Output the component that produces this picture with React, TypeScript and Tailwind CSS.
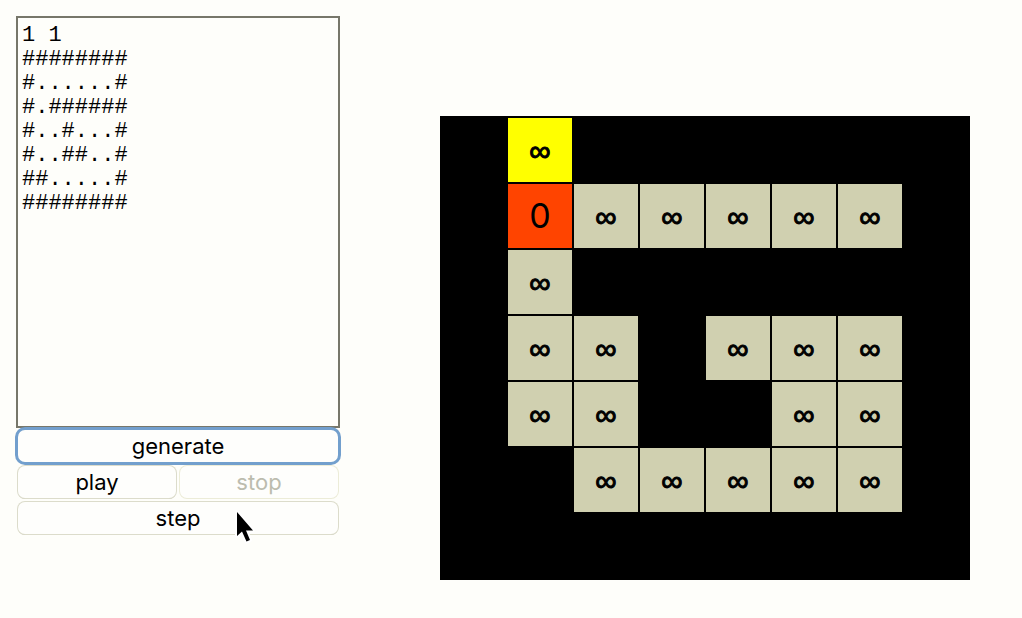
import { useState } from "react";

const initialMaze = [
  "1 1",
  "########",
  "#......#",
  "#.######",
  "#..#...#",
  "#..##..#",
  "##.....#",
  "########",
].join("\n");

const board = [
  "#n######",
  "#c.....#",
  "#.######",
  "#..#...#",
  "#..##..#",
  "##.....#",
  "########",
];

const fills: Record<string, string> = {
  "#": "bg-black",
  ".": "bg-[#d0d0b0]",
  n: "bg-[#ffff00]",
  c: "bg-[#ff4400]",
};

const buttonBase =
  "h-8 rounded-[7px] bg-[#fefefc] text-[22px] leading-6 text-black shadow-[0_0_0_1px_#dcdccb,0_1px_0_0_#c6c6b8] disabled:text-[#bcbcae] disabled:shadow-[0_0_0_1px_#ececd8]";

function Cell({ kind }: { kind: string }) {
  return (
    <td className={`h-16 w-16 p-0 pt-0.5 text-center align-middle ${fills[kind]}`}>
      {kind === "c" && <span className="text-[34px] leading-8">0</span>}
      {(kind === "." || kind === "n") && (
        <span className="font-['Liberation_Sans',sans-serif] text-[30px] leading-8 [-webkit-text-stroke:1px_#000]">
          ∞
        </span>
      )}
    </td>
  );
}

function Pointer() {
  return (
    <svg
      className="pointer-events-none absolute top-[506px] left-[234px] h-10 w-6 overflow-visible"
      viewBox="0 0 24 40"
      aria-hidden="true"
    >
      <path
        d="M3 6V30L8 25.5L12.5 35.5L16 34L12 24.5H19Z"
        fill="#000"
        stroke="#fff"
        strokeWidth="4"
        strokeLinejoin="round"
        paintOrder="stroke"
      />
    </svg>
  );
}

export default function App() {
  const [maze, setMaze] = useState(initialMaze);

  return (
    <main className="relative flex min-h-screen items-start gap-[100px] bg-[#fefefa] p-4 font-['Inter',sans-serif] text-black">
      <section className="flex w-[324px] shrink-0 flex-col">
        <textarea
          aria-label="Maze"
          className="h-[412px] resize-none border-2 border-[#77776a] bg-[#fefefa] px-1 py-1.5 font-['Liberation_Mono',monospace] text-[22px] leading-6 outline-none"
          value={maze}
          spellCheck={false}
          onChange={(e) => setMaze(e.target.value)}
        />
        <div className="mt-0.5 grid grid-cols-2 gap-1 px-0.5">
          <button
            type="button"
            className="col-span-2 h-8 rounded-[7px] bg-[#fefefc] text-[22px] leading-6 shadow-[0_0_0_3px_#729fcd]"
          >
            generate
          </button>
          <button type="button" className={buttonBase}>
            play
          </button>
          <button type="button" className={buttonBase} disabled>
            stop
          </button>
          <button type="button" className={`col-span-2 ${buttonBase}`}>
            step
          </button>
        </div>
      </section>

      <table className="mt-[100px] border-separate border-spacing-0.5 bg-black">
        <tbody>
          {board.map((row, y) => (
            <tr key={y}>
              {row.split("").map((kind, x) => (
                <Cell key={x} kind={kind} />
              ))}
            </tr>
          ))}
        </tbody>
      </table>
      <Pointer />
    </main>
  );
}
